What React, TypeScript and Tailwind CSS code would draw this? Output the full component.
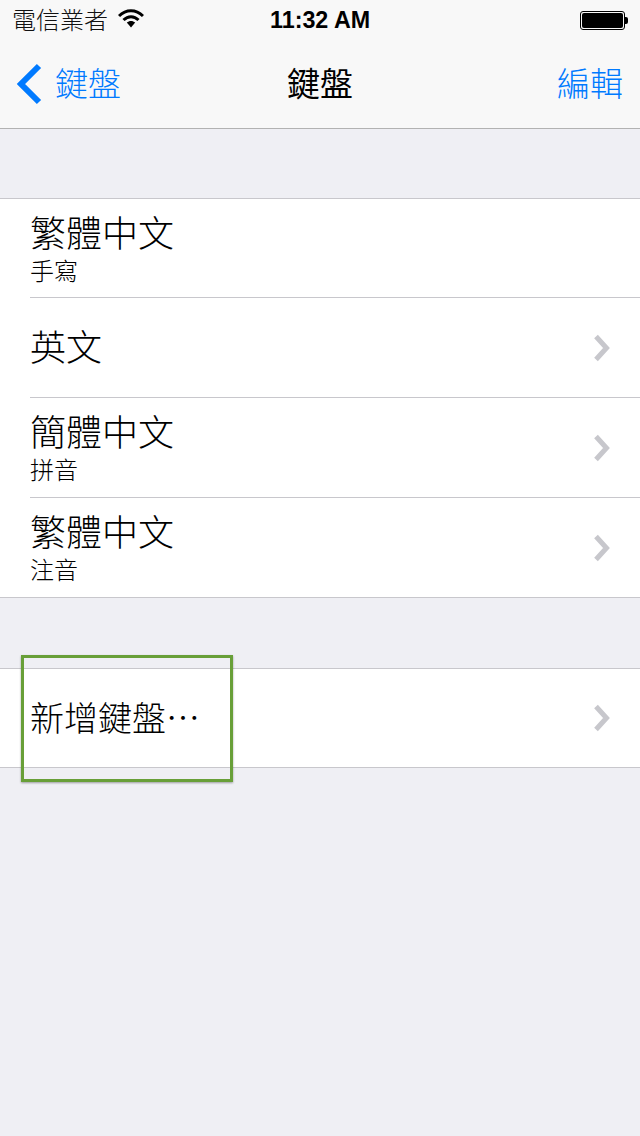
import { ReactNode } from 'react'

const cjk = "font-['Liberation_Sans','Noto_Sans_CJK_TC',sans-serif]"

function Chevron() {
  return (
    <svg width="18" height="28" viewBox="0 0 18 28" className="shrink-0">
      <path d="M3 2.5 L13.5 14 L3 25.5" fill="none" stroke="#c7c7cc" strokeWidth="5" />
    </svg>
  )
}

function Row({
  title,
  sub,
  chevron = true,
  divider = true,
  h = 'h-[99px]',
}: {
  title: ReactNode
  sub?: string
  chevron?: boolean
  divider?: boolean
  h?: string
}) {
  return (
    <div className={`ml-[30px] pr-[29px] flex items-center justify-between ${h} ${divider ? 'border-b border-[#c8c7cc]' : ''}`}>
      <div className={`flex flex-col ${sub ? 'pt-[5px]' : 'pt-[2px]'}`}>
        <div className="text-[36px] leading-[40px] font-light text-black">{title}</div>
        {sub && <div className="mt-[2px] text-[24px] leading-[30px] font-light text-black">{sub}</div>}
      </div>
      {chevron && <Chevron />}
    </div>
  )
}

export default function App() {
  return (
    <div className={`relative w-[640px] h-[1136px] overflow-hidden bg-[#efeff4] ${cjk}`}>
      <header className="h-[129px] bg-[#f8f8f8] border-b border-[#b2b2b2]">
        <div className="relative h-[40px] flex items-center justify-between pl-[12px] pr-[12px]">
          <div className="flex items-center gap-[10px]">
            <span className="pt-[2px] text-[24px] leading-[40px] font-light text-[#111]">電信業者</span>
            <svg width="26" height="20" viewBox="0 0 26 20" className="-mt-[2px]">
              <path d="M1 7 C8 0 18 0 25 7" fill="none" stroke="#000" strokeWidth="3" />
              <path d="M5.5 11 C10 6.5 16 6.5 20.5 11" fill="none" stroke="#000" strokeWidth="3" />
              <path d="M8.8 13.6 C11.2 11.4 14.8 11.4 17.2 13.6 L13 18.5 Z" fill="#000" />
            </svg>
          </div>
          <span className="absolute left-[270px] top-0 text-[23.3px] leading-[41px] font-bold text-black">11:32 AM</span>
          <div className="flex items-center">
            <div className="w-[45px] h-[19px] rounded-[3px] border border-black p-[1px]">
              <div className="w-full h-full rounded-[2px] bg-black" />
            </div>
            <div className="w-[3px] h-[7px] rounded-r-[2px] bg-black" />
          </div>
        </div>
        <div className="relative h-[88px] flex items-center justify-between pl-[16px] pr-[17px] pt-[2px]">
          <div className="flex items-center gap-[13px] text-[#007aff]">
            <svg width="26" height="42" viewBox="0 0 26 42" className="-mt-[2px]">
              <path d="M23 3 L5 21 L23 39" fill="none" stroke="#007aff" strokeWidth="6" />
            </svg>
            <span className="text-[33px] leading-[40px] font-light">鍵盤</span>
          </div>
          <span className="absolute left-0 right-0 text-center text-[33px] leading-[40px] font-normal text-black">鍵盤</span>
          <span className="text-[33px] leading-[40px] font-light text-[#007aff]">編輯</span>
        </div>
      </header>

      <section className="mt-[69px] bg-white border-y border-[#c8c7cc]">
        <Row title="繁體中文" sub="手寫" chevron={false} />
        <Row title="英文" h="h-[100px]" />
        <Row title="簡體中文" sub="拼音" h="h-[100px]" />
        <Row title="繁體中文" sub="注音" divider={false} />
      </section>

      <section className="mt-[70px] bg-white border-y border-[#c8c7cc]">
        <Row title={<span className="text-[34px]">新增鍵盤⋯</span>} divider={false} h="h-[98px]" />
      </section>

      <div className="absolute left-[21px] top-[655px] w-[212px] h-[127px] border-[3px] border-[#689f38] shadow-[0_1px_2px_rgba(0,0,0,0.35)]" />
    </div>
  )
}
